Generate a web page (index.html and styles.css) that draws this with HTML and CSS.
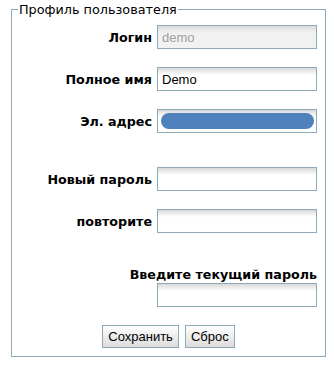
FILE: index.html
```html
<!DOCTYPE html>
<html lang="ru">
  <head>
    <meta charset="UTF-8" />
    <title>Профиль пользователя</title>
    <link rel="stylesheet" href="styles.css">
  </head>
  <body>
    <form class="profile-form" onsubmit="return false">
      <fieldset class="profile">
        <legend>Профиль пользователя</legend>

        <div class="rows">
          <div class="row">
            <label class="field-label" for="login">Логин</label>
            <input class="field" id="login" type="text" value="demo" disabled />
          </div>

          <div class="row">
            <label class="field-label" for="fullname">Полное имя</label>
            <input class="field" id="fullname" type="text" value="Demo" />
          </div>

          <div class="row">
            <label class="field-label">Эл. адрес</label>
            <div class="field field-masked"><span class="mask"></span></div>
          </div>

          <div class="row row-spaced">
            <label class="field-label" for="newpass">Новый пароль</label>
            <input class="field" id="newpass" type="password" />
          </div>

          <div class="row">
            <label class="field-label" for="repeat">повторите</label>
            <input class="field" id="repeat" type="password" />
          </div>

          <div class="current row-spaced">
            <label class="field-label" for="current">Введите текущий пароль</label>
            <input class="field" id="current" type="password" />
          </div>

          <div class="buttons">
            <button class="button" type="submit">Сохранить</button>
            <button class="button" type="reset">Сброс</button>
          </div>
        </div>
      </fieldset>
    </form>
  </body>
</html>
```

FILE: styles.css
```css
:root {
  --border-color: #8eaab9;
  --text-color: #000000;
  --field-width: 160px;
}

body {
  margin: 0;
  background-color: #ffffff;
  color: var(--text-color);
  font-family: 'DejaVu Sans', Verdana, sans-serif;
}

.profile-form {
  margin: 0;
}

.profile {
  margin: 2px 8px 0 11px;
  padding: 0 8px 8px 0;
  border: 1px solid var(--border-color);
}

.profile legend {
  margin-left: 6px;
  padding: 0 1px;
  font-size: 12.8px;
}

.rows {
  display: flex;
  flex-direction: column;
  gap: 18px;
  padding-top: 8px;
}

.row {
  display: flex;
  align-items: center;
  justify-content: flex-end;
  gap: 5px;
}

.row-spaced {
  margin-top: 16px;
}

.field-label {
  font-size: 12.7px;
  font-weight: bold;
  text-align: right;
}

.field {
  box-sizing: border-box;
  width: var(--field-width);
  height: 24px;
  margin: 0;
  padding: 0 4px;
  border: 1px solid var(--border-color);
  background: linear-gradient(#d9d9d9, #ffffff 7px);
  font-family: 'Liberation Sans', Arial, sans-serif;
  font-size: 13px;
  color: var(--text-color);
  outline: none;
}

.field:disabled {
  background: linear-gradient(#dcdcdc, #f1f1f1 7px);
  color: #a0a0a0;
}

.field-masked {
  padding: 3px 2px 3px 3px;
}

.mask {
  display: block;
  height: 16px;
  border-radius: 8px;
  background-color: #4f81bd;
}

.current {
  display: flex;
  flex-direction: column;
  align-items: flex-end;
  gap: 1px;
}

.buttons {
  display: flex;
  justify-content: center;
  gap: 6px;
  padding-left: 8px;
}

.button {
  height: 23px;
  padding: 0 5px;
  border: 1px solid var(--border-color);
  background: linear-gradient(#ffffff, #dcdcdc);
  font-family: 'Liberation Sans', Arial, sans-serif;
  font-size: 13px;
  color: var(--text-color);
  cursor: pointer;
}
```
